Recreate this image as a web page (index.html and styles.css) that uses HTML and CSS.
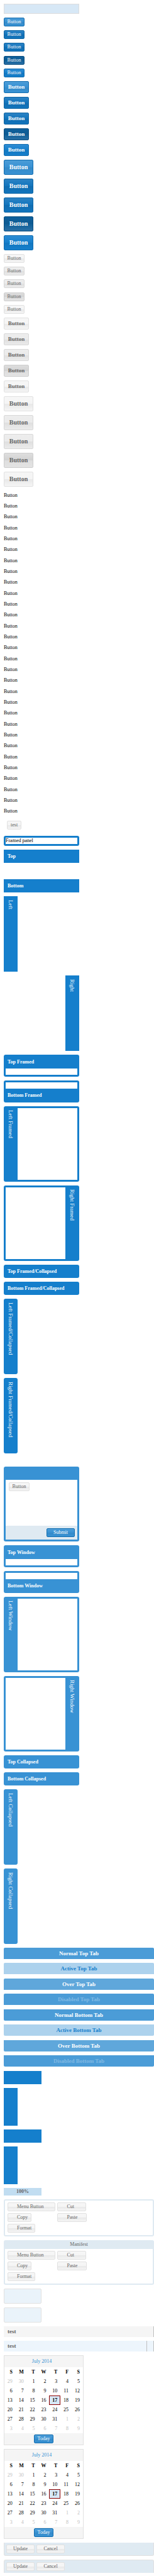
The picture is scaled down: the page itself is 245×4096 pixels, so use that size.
FILE: index.html
```html
<!DOCTYPE html>
<html lang="en">
<head>
<meta charset="utf-8">
<title>Theme components</title>
<link rel="stylesheet" href="styles.css">
</head>
<body>
<main class="page">
  <div class="swatch"></div>

  <div class="stack small">
    <button class="btn blue">Button</button>
    <button class="btn blue over">Button</button>
    <button class="btn blue over">Button</button>
    <button class="btn blue pressed">Button</button>
    <button class="btn blue off">Button</button>
  </div>
  <div class="stack medium">
    <button class="btn blue">Button</button>
    <button class="btn blue over">Button</button>
    <button class="btn blue over">Button</button>
    <button class="btn blue pressed">Button</button>
    <button class="btn blue off">Button</button>
  </div>
  <div class="stack large">
    <button class="btn blue">Button</button>
    <button class="btn blue over">Button</button>
    <button class="btn blue over">Button</button>
    <button class="btn blue pressed">Button</button>
    <button class="btn blue off">Button</button>
  </div>

  <div class="stack small">
    <button class="btn">Button</button>
    <button class="btn over">Button</button>
    <button class="btn over">Button</button>
    <button class="btn pressed">Button</button>
    <button class="btn">Button</button>
  </div>
  <div class="stack medium">
    <button class="btn">Button</button>
    <button class="btn over">Button</button>
    <button class="btn over">Button</button>
    <button class="btn pressed">Button</button>
    <button class="btn">Button</button>
  </div>
  <div class="stack large">
    <button class="btn">Button</button>
    <button class="btn over">Button</button>
    <button class="btn over">Button</button>
    <button class="btn pressed">Button</button>
    <button class="btn">Button</button>
  </div>

  <div class="stack plain-list">
    <button class="plain">Button</button>
    <button class="plain">Button</button>
    <button class="plain">Button</button>
    <button class="plain">Button</button>
    <button class="plain">Button</button>
    <button class="plain">Button</button>
    <button class="plain">Button</button>
    <button class="plain">Button</button>
    <button class="plain">Button</button>
    <button class="plain">Button</button>
    <button class="plain">Button</button>
    <button class="plain">Button</button>
    <button class="plain">Button</button>
    <button class="plain">Button</button>
    <button class="plain">Button</button>
    <button class="plain">Button</button>
    <button class="plain">Button</button>
    <button class="plain">Button</button>
    <button class="plain">Button</button>
    <button class="plain">Button</button>
    <button class="plain">Button</button>
    <button class="plain">Button</button>
    <button class="plain">Button</button>
    <button class="plain">Button</button>
    <button class="plain">Button</button>
    <button class="plain">Button</button>
    <button class="plain">Button</button>
    <button class="plain">Button</button>
    <button class="plain">Button</button>
    <button class="plain">Button</button>
  </div>

  <div class="toolbar-clear"><button class="btn">test</button></div>

  <section class="panel frame-all"><div class="content">Framed panel</div></section>
  <section class="panel"><h2 class="title">Top</h2><div class="content"></div></section>
  <section class="panel"><div class="content"></div><h2 class="title">Bottom</h2></section>
  <section class="panel side"><h2 class="title">Left</h2><div class="content"></div></section>
  <section class="panel side"><div class="content"></div><h2 class="title">Right</h2></section>

  <section class="panel framed top"><h2 class="title">Top Framed</h2><div class="content"></div></section>
  <section class="panel framed bottom"><div class="content"></div><h2 class="title">Bottom Framed</h2></section>
  <section class="panel framed side left"><h2 class="title">Left Framed</h2><div class="content"></div></section>
  <section class="panel framed side right"><div class="content"></div><h2 class="title">Right Framed</h2></section>
  <section class="panel collapsed"><h2 class="title">Top Framed/Collapsed</h2></section>
  <section class="panel collapsed"><h2 class="title">Bottom Framed/Collapsed</h2></section>
  <section class="panel side collapsed"><h2 class="title">Left Framed/Collapsed</h2></section>
  <section class="panel side collapsed"><h2 class="title">Right Framed/Collapsed</h2></section>

  <div class="blank"></div>

  <section class="panel window dialog">
    <div class="title"></div>
    <div class="content"><button class="btn">Button</button></div>
    <div class="dialog-footer"><button class="btn blue wide">Submit</button></div>
  </section>
  <section class="panel window framed top"><h2 class="title">Top Window</h2><div class="content"></div></section>
  <section class="panel window framed bottom"><div class="content"></div><h2 class="title">Bottom Window</h2></section>
  <section class="panel window framed side left"><h2 class="title">Left Window</h2><div class="content"></div></section>
  <section class="panel window framed side right"><div class="content"></div><h2 class="title">Right Window</h2></section>
  <section class="panel window collapsed"><h2 class="title">Top Collapsed</h2></section>
  <section class="panel window collapsed"><h2 class="title">Bottom Collapsed</h2></section>
  <section class="panel window side collapsed"><h2 class="title">Left Collapsed</h2></section>
  <section class="panel window side collapsed"><h2 class="title">Right Collapsed</h2></section>

  <div class="stack tabs">
    <button class="tab">Normal Top Tab</button>
    <button class="tab active">Active Top Tab</button>
    <button class="tab hover">Over Top Tab</button>
    <button class="tab" disabled>Disabled Top Tab</button>
    <button class="tab low">Normal Bottom Tab</button>
    <button class="tab low active">Active Bottom Tab</button>
    <button class="tab low hover">Over Bottom Tab</button>
    <button class="tab low" disabled>Disabled Bottom Tab</button>
  </div>

  <div class="bar"></div>
  <div class="bar upright"></div>
  <div class="bar"></div>
  <div class="bar upright"></div>

  <div class="progress" role="progressbar" aria-valuenow="100">100%</div>

  <section class="group">
    <div class="group-body">
      <button class="btn icon arrow">Menu Button</button>
      <button class="btn icon arrow">Cut</button>
      <button class="btn icon">Copy</button>
      <button class="btn icon split">Paste</button>
      <button class="btn icon">Format</button>
    </div>
  </section>
  <section class="group titled">
    <h2 class="group-title">Manifest</h2>
    <div class="group-body">
      <button class="btn icon arrow">Menu Button</button>
      <button class="btn icon arrow">Cut</button>
      <button class="btn icon">Copy</button>
      <button class="btn icon split">Paste</button>
      <button class="btn icon">Format</button>
    </div>
  </section>

  <div class="tip"></div>
  <div class="tip"></div>

  <div class="column-header">test</div>
  <div class="column-header hover">test<span class="trigger"></span></div>

  <section class="calendar">
    <button class="month">July 2014</button>
    <table>
      <thead><tr><th>S</th><th>M</th><th>T</th><th>W</th><th>T</th><th>F</th><th>S</th></tr></thead>
      <tbody>
        <tr><td class="dim">29</td><td class="dim">30</td><td>1</td><td>2</td><td>3</td><td>4</td><td>5</td></tr>
        <tr><td>6</td><td>7</td><td>8</td><td>9</td><td>10</td><td>11</td><td>12</td></tr>
        <tr><td>13</td><td>14</td><td>15</td><td>16</td><td class="today">17</td><td>18</td><td>19</td></tr>
        <tr><td>20</td><td>21</td><td>22</td><td>23</td><td>24</td><td>25</td><td>26</td></tr>
        <tr><td>27</td><td>28</td><td>29</td><td>30</td><td>31</td><td class="dim">1</td><td class="dim">2</td></tr>
        <tr><td class="dim">3</td><td class="dim">4</td><td class="dim">5</td><td class="dim">6</td><td class="dim">7</td><td class="dim">8</td><td class="dim">9</td></tr>
      </tbody>
    </table>
    <div class="calendar-footer"><button class="btn blue">Today</button></div>
  </section>
  <section class="calendar">
    <button class="month">July 2014</button>
    <table>
      <thead><tr><th>S</th><th>M</th><th>T</th><th>W</th><th>T</th><th>F</th><th>S</th></tr></thead>
      <tbody>
        <tr><td class="dim">29</td><td class="dim">30</td><td>1</td><td>2</td><td>3</td><td>4</td><td>5</td></tr>
        <tr><td>6</td><td>7</td><td>8</td><td>9</td><td>10</td><td>11</td><td>12</td></tr>
        <tr><td>13</td><td>14</td><td>15</td><td>16</td><td class="today">17</td><td>18</td><td>19</td></tr>
        <tr><td>20</td><td>21</td><td>22</td><td>23</td><td>24</td><td>25</td><td>26</td></tr>
        <tr><td>27</td><td>28</td><td>29</td><td>30</td><td>31</td><td class="dim">1</td><td class="dim">2</td></tr>
        <tr><td class="dim">3</td><td class="dim">4</td><td class="dim">5</td><td class="dim">6</td><td class="dim">7</td><td class="dim">8</td><td class="dim">9</td></tr>
      </tbody>
    </table>
    <div class="calendar-footer"><button class="btn blue">Today</button></div>
  </section>

  <div class="editor-bar"><button class="btn wide">Update</button><button class="btn wide">Cancel</button></div>
  <div class="editor-bar above"><button class="btn wide">Update</button><button class="btn wide">Cancel</button></div>
</main>
</body>
</html>
```
FILE: styles.css
```css
* { box-sizing: border-box; }

body {
  margin: 0;
  background: #fff;
  color: #000;
  font: 8px/10px "Liberation Serif", serif;
}

button { margin: 0; font: inherit; }

.page {
  display: flex;
  flex-direction: column;
  align-items: flex-start;
  gap: 6px;
  padding: 6px 0 7px 6px;
}

.swatch {
  width: 120px;
  height: 16px;
  border: 1px solid #ddd;
  background: #d7e8f6;
}

/* Buttons */
.stack {
  display: flex;
  flex-direction: column;
  align-items: flex-start;
  gap: 6px;
}

.btn {
  height: 14px;
  padding: 0 4px;
  border: 1px solid #e1e1e1;
  border-radius: 2px;
  background: linear-gradient(#f6f6f6, #f5f5f5 50%, #e8e8e8 51%, #f5f5f5);
  color: #666;
  line-height: 12px;
  text-align: center;
  white-space: nowrap;
}
.btn.over {
  border-color: #d8d8d8;
  background: linear-gradient(#ededed, #ebebeb 50%, #dfdfdf 51%, #ebebeb);
}
.btn.pressed {
  border-color: #cecece;
  background: linear-gradient(#dedede, #d2d2d2 50%, #dedede 51%, #e3e3e3);
}
.btn.blue {
  border-color: #126daf;
  background: linear-gradient(#4b9cd7, #3892d4 50%, #358ac8 51%, #3892d4);
  color: #fff;
}
.btn.blue.over {
  border-color: #0f65a3;
  background: linear-gradient(#2b82c4, #1275bd 50%, #116db1 51%, #1275bd);
}
.btn.blue.pressed {
  border-color: #0b4e7f;
  background: linear-gradient(#0f609c, #0e5b92 50%, #0f5f98 51%, #296fa5);
}
.btn.blue.off {
  background: linear-gradient(#2d8cd4, #157fcc 50%, #1377c0 51%, #157fcc);
}
.btn.wide { width: 45px; }

.small .btn { min-width: 33px; }
.small .btn:nth-child(3n) { margin-bottom: 1px; }
.medium .btn { width: 40px; height: 19px; font-size: 9px; font-weight: bold; line-height: 17px; }
.large .btn { width: 47px; height: 24px; font-size: 10px; font-weight: bold; line-height: 22px; }

.plain {
  height: 11px;
  padding: 0;
  border: 0;
  background: none;
  color: #000;
  line-height: 11px;
}
.plain:nth-child(3n):not(:last-child) { margin-bottom: 1px; }
.plain-list { padding: 2px 0 0; }

.toolbar-clear { display: flex; padding: 4px 5px; }
.toolbar-clear .btn { padding: 0 5px; }

/* Panels and windows */
.panel {
  --skin: #157fcc;
  display: flex;
  flex-direction: column;
  width: 120px;
}
.window { --skin: #3892d4; }

.title {
  min-height: 21px;
  margin: 0;
  padding: 0 6px;
  background: var(--skin);
  color: #fff;
  font-size: 8px;
  font-weight: bold;
  line-height: 21px;
}
.content { flex: 1; min-height: 10px; background: #fff; }

.frame-all { padding: 3px; border-radius: 3px; background: var(--skin); }

.framed, .collapsed, .dialog { border-radius: 3px; background: var(--skin); }
.framed .title, .collapsed .title { background: none; }
.framed .title { padding: 0 3px; }
.framed.top { padding: 1px 3px 3px; }
.framed.bottom { padding: 3px 3px 1px; }

.side { flex-direction: row; min-height: 120px; }
.side .title {
  width: 22px;
  padding: 6px 0;
  font-size: 9px;
  font-weight: normal;
  line-height: 22px;
  writing-mode: vertical-rl;
}
.framed.left { padding: 3px 3px 3px 0; }
.framed.right { padding: 3px 0 3px 3px; }
.framed.side .title { padding: 3px 0; }
.side.collapsed { width: 22px; }

.blank { height: 9px; }

.dialog { padding: 0 3px 3px; }
.dialog .content { min-height: 73px; padding: 4px 5px; }
.dialog .btn { min-width: 33px; }
.dialog-footer {
  display: flex;
  justify-content: flex-end;
  padding: 4px;
  background: #dfeaf2;
}

/* Tabs */
.tabs { align-self: stretch; align-items: stretch; }
.tab {
  height: 18px;
  padding: 0;
  border: 0;
  border-radius: 2px 2px 0 0;
  background: #4b9cd7;
  color: #fff;
  font-size: 9px;
  font-weight: bold;
  line-height: 18px;
}
.tab:nth-child(even) { margin-bottom: 1px; }
.tab.low { border-radius: 0 0 2px 2px; }
.tab.active { background: #add2ed; color: #157fcc; }
.tab.hover { background: #5fa7db; }
.tab:disabled { color: #81b9e3; }

/* Toolbars and progress */
.bar { width: 60px; height: 21px; background: #157fcc; }
.bar.upright { width: 22px; height: 60px; }

.progress {
  width: 60px;
  background: #c1ddf1;
  color: #666;
  font-weight: bold;
  line-height: 12px;
  text-align: center;
}

/* Button groups */
.group {
  align-self: stretch;
  border: 2px solid #dfeaf2;
  border-radius: 3px;
}
.group.titled { border-top: 0; }
.group-title {
  margin: 0;
  background: #dfeaf2;
  color: #666;
  font-size: 8px;
  font-weight: normal;
  line-height: 14px;
  text-align: center;
}
.group-body {
  display: grid;
  grid-template-columns: max-content 1fr;
  justify-items: start;
  gap: 3px;
  padding: 3px 4px 4px;
}
.btn.icon { padding: 0 5px 0 14px; }
.btn.icon.arrow { padding-right: 18px; }
.btn.icon.split { padding-right: 14px; }

.tip {
  width: 60px;
  height: 24px;
  border: 1px solid #e1e1e1;
  border-radius: 2px;
  background: #eaf3fa;
}

/* Grid column headers */
.column-header {
  display: flex;
  align-self: stretch;
  justify-content: space-between;
  height: 17px;
  padding-left: 6px;
  border-right: 1px solid #c0c0c0;
  background: #f5f5f5;
  color: #666;
  font-size: 9px;
  font-weight: bold;
  line-height: 17px;
}
.column-header.hover { background: #edf5fc; }
.trigger { width: 11px; border-left: 1px solid #c0c0c0; }

/* Date picker */
.calendar {
  width: 127px;
  border: 1px solid #e1e1e1;
  background: #fff;
}
.month {
  display: block;
  width: 100%;
  height: 18px;
  padding: 0 6px 0 0;
  border: 0;
  background: #f5f5f5;
  color: #3892d4;
  line-height: 18px;
}
.calendar table {
  width: 100%;
  border-collapse: separate;
  border-spacing: 0;
  table-layout: fixed;
}
.calendar th, .calendar td {
  height: 15px;
  padding: 0 4px 0 0;
  border: 1px solid transparent;
  line-height: 13px;
  text-align: right;
}
.calendar .dim { color: #c0c0c0; }
.calendar .today { border-color: #8b0000; background: #d7e8f6; font-weight: bold; }
.calendar-footer {
  display: flex;
  justify-content: center;
  padding: 2px 0;
  background: #f5f5f5;
}
.calendar-footer .btn { min-width: 31px; }

/* Row editor buttons */
.editor-bar {
  display: flex;
  align-self: stretch;
  gap: 3px;
  padding: 3px;
  border: 1px solid #e1e1e1;
  border-top: 0;
  border-radius: 0 0 3px 3px;
  background: #dfeaf2;
}
.editor-bar.above {
  border-top: 1px solid #e1e1e1;
  border-bottom: 0;
  border-radius: 3px 3px 0 0;
}
```
